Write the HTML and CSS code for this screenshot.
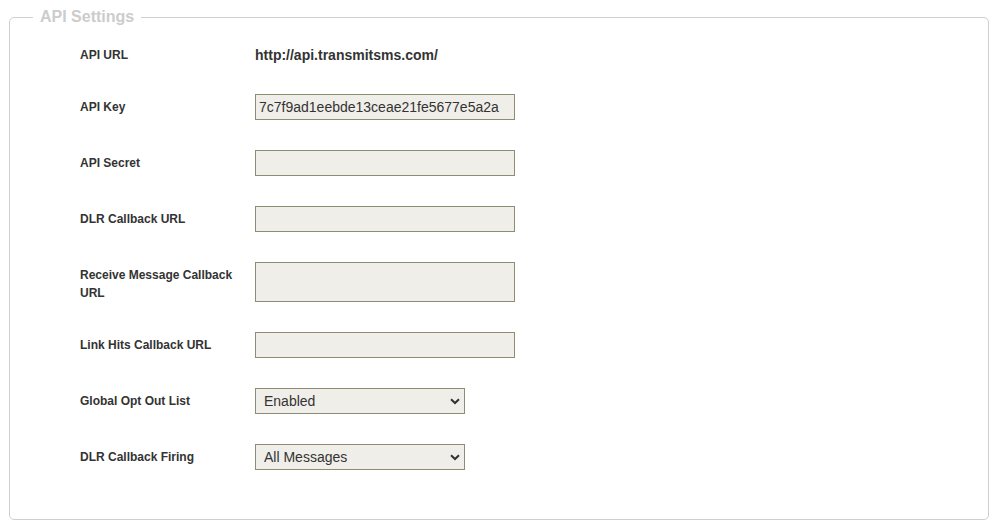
FILE: index.html
```html
<!DOCTYPE html>
<html>
<head>
<meta charset="utf-8">
<link rel="stylesheet" href="styles.css">
</head>
<body>
<div class="page">
  <fieldset class="panel">
    <legend class="panel-title">API Settings</legend>
    <div class="rows">
      <div class="row row-static">
        <div class="label">API URL</div>
        <div class="value">http://api.transmitsms.com/</div>
      </div>
      <div class="row">
        <label class="label">API Key</label>
        <input class="field" type="text" value="7c7f9ad1eebde13ceae21fe5677e5a2a">
      </div>
      <div class="row">
        <label class="label">API Secret</label>
        <input class="field" type="text" value="">
      </div>
      <div class="row">
        <label class="label">DLR Callback URL</label>
        <input class="field" type="text" value="">
      </div>
      <div class="row">
        <label class="label label-multi">Receive Message Callback URL</label>
        <textarea class="field area"></textarea>
      </div>
      <div class="row">
        <label class="label">Link Hits Callback URL</label>
        <input class="field" type="text" value="">
      </div>
      <div class="row">
        <label class="label">Global Opt Out List</label>
        <div class="select-wrap">
          <select class="field select"><option>Enabled</option><option>Disabled</option></select>
          <svg class="chev" width="10" height="7" viewBox="0 0 10 7"><path d="M1 1.2 L5 5 L9 1.2" fill="none" stroke="#333" stroke-width="2"/></svg>
        </div>
      </div>
      <div class="row">
        <label class="label">DLR Callback Firing</label>
        <div class="select-wrap">
          <select class="field select"><option>All Messages</option><option>Failed Only</option></select>
          <svg class="chev" width="10" height="7" viewBox="0 0 10 7"><path d="M1 1.2 L5 5 L9 1.2" fill="none" stroke="#333" stroke-width="2"/></svg>
        </div>
      </div>
    </div>
  </fieldset>
</div>
</body>
</html>
```
FILE: styles.css
```css
html, body {
  margin: 0;
  padding: 0;
  background: #fff;
}
body {
  font-family: "Liberation Sans", Arial, sans-serif;
  color: #333;
}
.page {
  padding: 8px 0 0 9px;
  width: 980px;
}
.panel {
  margin: 0;
  border: 1px solid #cfcfcf;
  border-radius: 5px;
  padding: 18px 0 49px 0;
  min-width: 0;
  box-sizing: border-box;
  width: 980px;
}
.panel-title {
  margin-left: 23px;
  padding: 0 7px;
  font-size: 16px;
  font-weight: bold;
  line-height: 18px;
  color: #cccccc;
}
.rows {
  display: flex;
  flex-direction: column;
  gap: 30px;
  padding-left: 70px;
}
.row {
  display: flex;
  align-items: center;
}
.row-static {
  height: 18px;
  padding-top: 2px;
}
.label {
  width: 160px;
  margin-right: 15px;
  font-size: 12px;
  font-weight: bold;
  line-height: 18px;
  color: #333;
}
.label-multi {
  padding-top: 4px;
}
.value {
  font-size: 14px;
  font-weight: bold;
  color: #333;
}
.field {
  box-sizing: border-box;
  width: 260px;
  height: 26px;
  margin: 0;
  border: 1px solid #8e8c74;
  background: #f0eee9;
  font-family: "Liberation Sans", Arial, sans-serif;
  font-size: 14px;
  color: #333;
  padding: 0 3px;
  border-radius: 0;
  outline: none;
}
.area {
  height: 40px;
  resize: none;
  display: block;
}
.select-wrap {
  position: relative;
  width: 210px;
  height: 26px;
}
.select {
  width: 210px;
  -webkit-appearance: none;
  appearance: none;
  padding: 0 8px;
}
.chev {
  position: absolute;
  left: 195px;
  top: 10px;
  pointer-events: none;
}
```
